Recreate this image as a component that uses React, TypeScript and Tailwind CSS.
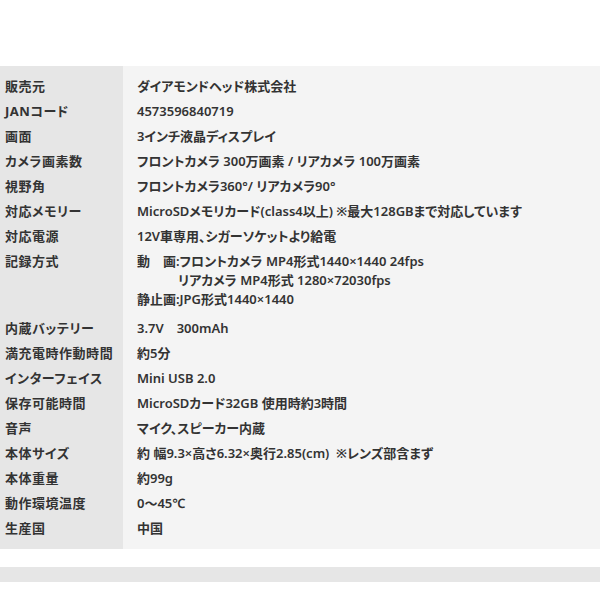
import React from 'react';

const specs: { label: string; value: React.ReactNode }[] = [
  { label: '販売元', value: 'ダイアモンドヘッド株式会社' },
  { label: 'JANコード', value: '4573596840719' },
  { label: '画面', value: '3インチ液晶ディスプレイ' },
  { label: 'カメラ画素数', value: 'フロントカメラ 300万画素 / リアカメラ 100万画素' },
  { label: '視野角', value: 'フロントカメラ360°/ リアカメラ90°' },
  { label: '対応メモリー', value: 'MicroSDメモリカード(class4以上) ※最大128GBまで対応しています' },
  { label: '対応電源', value: '12V車専用、シガーソケットより給電' },
  {
    label: '記録方式',
    value: (
      <div className="pb-[4px]">
        <p>動　画:フロントカメラ MP4形式1440×1440 24fps</p>
        <p className="pl-[41px]">リアカメラ MP4形式 1280×72030fps</p>
        <p>静止画:JPG形式1440×1440</p>
      </div>
    ),
  },
  { label: '内蔵バッテリー', value: '3.7V　300mAh' },
  { label: '満充電時作動時間', value: '約5分' },
  { label: 'インターフェイス', value: 'Mini USB 2.0' },
  { label: '保存可能時間', value: 'MicroSDカード32GB 使用時約3時間' },
  { label: '音声', value: 'マイク、スピーカー内蔵' },
  { label: '本体サイズ', value: '約 幅9.3×高さ6.32×奥行2.85(cm)  ※レンズ部含まず' },
  { label: '本体重量', value: '約99g' },
  { label: '動作環境温度', value: '0〜45℃' },
  { label: '生産国', value: '中国' },
];

export default function App() {
  return (
    <div
      className="w-[600px] h-[600px] bg-white text-[#333] leading-[19px] [font-feature-settings:'palt']"
      style={{ fontFamily: '"Noto Sans", "Noto Sans CJK JP", sans-serif' }}
    >
      <div className="h-[66px]" />
      {/* spec table: grey label column, lighter value column */}
      <div className="grid grid-cols-[123px_1fr] py-[8px] bg-[linear-gradient(to_right,#e6e6e6_123px,#f4f4f4_123px)]">
        {specs.map((s) => (
          <React.Fragment key={s.label}>
            <div className="pl-[5px] py-[3px] text-[13px] font-bold tracking-[0.04em] whitespace-nowrap">{s.label}</div>
            <div className="pl-[14px] py-[3px] text-[13px] font-semibold whitespace-pre">{s.value}</div>
          </React.Fragment>
        ))}
      </div>
      <div className="h-[18px]" />
      <div className="h-[15px] bg-[#e6e6e6]" />
    </div>
  );
}
